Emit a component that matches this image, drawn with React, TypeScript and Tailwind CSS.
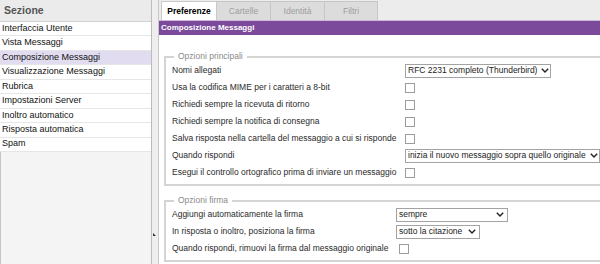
import React from 'react';

const sections = [
  'Interfaccia Utente',
  'Vista Messaggi',
  'Composizione Messaggi',
  'Visualizzazione Messaggi',
  'Rubrica',
  'Impostazioni Server',
  'Inoltro automatico',
  'Risposta automatica',
  'Spam',
];

const Chevron = () => (
  <svg width="8" height="5" viewBox="0 0 8 5" className="shrink-0">
    <path d="M0.8 0.8 L4 4 L7.2 0.8" fill="none" stroke="#222" strokeWidth="1.4" />
  </svg>
);

const Select = ({ value, width }: { value: string; width: string }) => (
  <div className={`${width} h-[14px] flex items-center justify-between gap-1 border border-[#a3a3a3] bg-white pl-[2px] pr-[3px] text-[8.5px] text-[#222] whitespace-nowrap`}>
    <span>{value}</span>
    <Chevron />
  </div>
);

const Checkbox = ({ offset = '' }: { offset?: string }) => (
  <div className={`w-[10px] h-[10px] border border-[#9c9c9c] bg-white ${offset}`} />
);

const Row = ({ label, labelWidth, children }: { label: string; labelWidth: string; children: React.ReactNode }) => (
  <div className="flex items-center h-[17px]">
    <div className={`${labelWidth} shrink-0 text-[8.5px] text-[#2a2a2a] whitespace-nowrap`}>{label}</div>
    {children}
  </div>
);

export default function App() {
  return (
    <div className="w-[600px] h-[264px] flex overflow-hidden bg-white font-['Liberation_Sans',Arial,sans-serif]">
      {/* Sezioni */}
      <div className="w-[152px] shrink-0 flex flex-col border-r border-[#bcbcbc]">
        <div className="h-[22px] shrink-0 flex items-center pl-[4px] bg-[#ebebeb] border-b border-[#d2d2d2] text-[10.5px] font-bold text-[#555]">
          Sezione
        </div>
        {sections.map((s) => (
          <div
            key={s}
            className={`h-[14.45px] shrink-0 flex items-center pl-[2px] border-b border-[#e6e6e6] text-[9px] text-[#111] whitespace-nowrap ${
              s === 'Composizione Messaggi' ? 'bg-[#e2dcf1]' : 'bg-white'
            }`}
          >
            {s}
          </div>
        ))}
        <div className="flex-1 bg-[#f4f4f4] border-l border-[#c4c4c4]" />
      </div>

      {/* Splitter */}
      <div className="w-[7px] shrink-0 bg-[#eeeeee] border-r border-[#c8c8c8] flex flex-col justify-end pb-[28px] items-center">
        <svg width="4" height="4" viewBox="0 0 4 4">
          <path d="M0 4 L0 1 L3 4 Z" fill="#333" />
        </svg>
      </div>

      {/* Pannello */}
      <div className="flex-1 min-w-0 flex flex-col overflow-hidden">
        <div className="h-[20px] shrink-0 bg-[#ececec] flex items-end pl-[2px]">
          <div className="w-[56px] h-[19px] flex items-center justify-center bg-white border border-b-0 border-[#c9c9c9] text-[8.5px] font-bold text-black">
            Preferenze
          </div>
          <div className="w-[54px] h-[19px] flex items-center justify-center bg-[#dcdcdc] border border-b-0 border-l-0 border-[#c6c6c6] text-[8.5px] text-[#9c9c9c]">
            Cartelle
          </div>
          <div className="w-[54px] h-[19px] flex items-center justify-center bg-[#dcdcdc] border border-b-0 border-l-0 border-[#c6c6c6] text-[8.5px] text-[#9c9c9c]">
            Identità
          </div>
          <div className="w-[53px] h-[19px] flex items-center justify-center bg-[#dcdcdc] border border-b-0 border-l-0 border-[#c6c6c6] text-[8.5px] text-[#9c9c9c]">
            Filtri
          </div>
        </div>
        <div className="h-[15px] shrink-0 flex items-center pl-[2px] bg-[#7b4a9b] border-t border-[#cdb9dc] text-[8px] font-bold text-white">
          Composizione Messaggi
        </div>

        <div className="pt-[16px] pl-[5px] w-[480px]">
          <fieldset className="border-2 border-[#d4d4d4] pl-[6px] pr-2 pb-[3px]">
            <legend className="ml-[2px] px-[4px] text-[8.5px] leading-[11px] text-[#8a8a8a]">Opzioni principali</legend>
            <Row label="Nomi allegati" labelWidth="w-[233px]">
              <Select value="RFC 2231 completo (Thunderbird)" width="w-[146px]" />
            </Row>
            <Row label="Usa la codifica MIME per i caratteri a 8-bit" labelWidth="w-[233px]">
              <Checkbox />
            </Row>
            <Row label="Richiedi sempre la ricevuta di ritorno" labelWidth="w-[233px]">
              <Checkbox />
            </Row>
            <Row label="Richiedi sempre la notifica di consegna" labelWidth="w-[233px]">
              <Checkbox />
            </Row>
            <Row label="Salva risposta nella cartella del messaggio a cui si risponde" labelWidth="w-[233px]">
              <Checkbox />
            </Row>
            <Row label="Quando rispondi" labelWidth="w-[233px]">
              <Select value="inizia il nuovo messaggio sopra quello originale" width="w-[195px]" />
            </Row>
            <Row label="Esegui il controllo ortografico prima di inviare un messaggio" labelWidth="w-[233px]">
              <Checkbox />
            </Row>
          </fieldset>

          <fieldset className="mt-[9px] border-2 border-[#d4d4d4] pl-[6px] pr-2 pb-[3px]">
            <legend className="ml-[2px] px-[4px] text-[8.5px] leading-[11px] text-[#8a8a8a]">Opzioni firma</legend>
            <Row label="Aggiungi automaticamente la firma" labelWidth="w-[224px]">
              <Select value="sempre" width="w-[112px]" />
            </Row>
            <Row label="In risposta o inoltro, posiziona la firma" labelWidth="w-[224px]">
              <Select value="sotto la citazione" width="w-[84px]" />
            </Row>
            <Row label="Quando rispondi, rimuovi la firma dal messaggio originale" labelWidth="w-[224px]">
              <Checkbox offset="ml-[3px]" />
            </Row>
          </fieldset>
        </div>
      </div>
    </div>
  );
}
